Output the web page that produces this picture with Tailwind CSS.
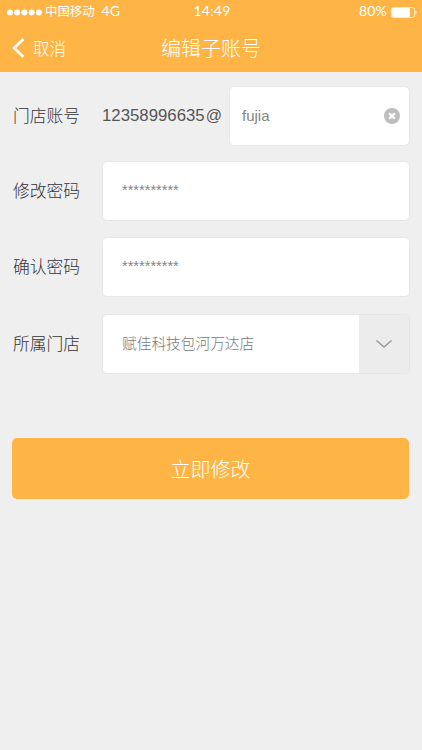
<!DOCTYPE html>
<html lang="zh-CN">

<head>
    <meta charset="UTF-8" />
    <meta name="viewport" content="width=device-width, initial-scale=1.0" />
    <title>编辑子账号</title>
    <script src="https://cdn.jsdelivr.net/npm/@tailwindcss/browser@4"></script>
</head>

<body class="bg-[#efefef] min-h-screen font-['Liberation_Sans','Noto_Sans_CJK_SC',sans-serif] font-light text-[#333]">

    <header class="bg-[#ffb546] text-white h-[72px]">
        <!-- Status bar -->
        <div class="grid grid-cols-3 items-center h-6 pl-[7px] pr-[5px]">
            <div class="flex items-center whitespace-nowrap">
                <svg class="w-[35px] h-[7px]" viewBox="0 0 35 7" fill="currentColor">
                    <circle cx="3" cy="3.5" r="3" />
                    <circle cx="10.2" cy="3.5" r="3" />
                    <circle cx="17.4" cy="3.5" r="3" />
                    <circle cx="24.6" cy="3.5" r="3" />
                    <circle cx="31.8" cy="3.5" r="3" />
                </svg>
                <span class="ml-[3px] text-[12.4px] leading-6 font-normal">中国移动</span>
                <span class="ml-[7px] pb-0.5 text-[14px] leading-[22px] font-['Lato','Liberation_Sans',sans-serif] font-normal">4G</span>
            </div>
            <div class="pb-0.5 text-center text-[14px] leading-[22px] font-['Lato','Liberation_Sans',sans-serif] font-normal tracking-[0.2px]">14:49</div>
            <div class="flex items-center justify-end">
                <span class="mr-1 pb-0.5 text-[14px] leading-[22px] font-['Lato','Liberation_Sans',sans-serif] font-normal tracking-[0.2px]">80%</span>
                <svg class="w-[26px] h-[11px]" viewBox="0 0 26 11" fill="none">
                    <rect x="0.5" y="0.5" width="23" height="10" rx="2" stroke="white" stroke-opacity="0.7" />
                    <rect x="1" y="1" width="18" height="9" rx="1" fill="white" />
                    <path d="M24.5 3.5c1.3 .4 1.3 3.6 0 4z" fill="white" />
                </svg>
            </div>
        </div>
        <!-- Title bar -->
        <div class="grid grid-cols-3 items-center h-12 px-3">
            <a href="#" class="flex items-center gap-[8px] text-[16.5px]">
                <svg class="w-[13px] h-5" viewBox="0 0 13 20" fill="none" stroke="currentColor" stroke-width="2.6">
                    <path d="M11.5 1L2 10l9.5 9" />
                </svg>
                <span class="pt-0.5">取消</span>
            </a>
            <h1 class="pt-0.5 text-center text-[20px] font-light whitespace-nowrap">编辑子账号</h1>
        </div>
    </header>

    <form class="px-3 pt-[14px]">
        <div class="flex items-center h-[60px]">
            <label class="w-[90px] pl-px pt-0.5 text-[16.8px]">门店账号</label>
            <span class="w-[127px] text-[16.8px] font-normal text-[#555] whitespace-nowrap">12358996635<span class="ml-px text-[16px]">@</span></span>
            <div class="flex items-center justify-between w-[181px] h-[60px] pl-3 pr-[9px] bg-white border border-[#e8e7e7] rounded-[5px]">
                <span class="text-[15px] font-normal text-[#858585]">fujia</span>
                <svg class="w-4 h-4" viewBox="0 0 16 16">
                    <circle cx="8" cy="8" r="8" fill="#bdbdbd" />
                    <path d="M5.2 5.2l5.6 5.6M10.8 5.2l-5.6 5.6" stroke="white" stroke-width="2.2" />
                </svg>
            </div>
        </div>

        <div class="flex items-center h-[60px] mt-[15px]">
            <label class="w-[90px] pl-px pt-0.5 text-[16.8px]">修改密码</label>
            <div class="flex items-center w-[308px] h-[60px] pl-[19px] bg-white border border-[#e8e7e7] rounded-[5px]">
                <span class="text-[14.6px] font-normal text-[#858585]">**********</span>
            </div>
        </div>

        <div class="flex items-center h-[60px] mt-4">
            <label class="w-[90px] pl-px pt-0.5 text-[16.8px]">确认密码</label>
            <div class="flex items-center w-[308px] h-[60px] pl-[19px] bg-white border border-[#e8e7e7] rounded-[5px]">
                <span class="text-[14.6px] font-normal text-[#858585]">**********</span>
            </div>
        </div>

        <div class="flex items-center h-[60px] mt-[17px]">
            <label class="w-[90px] pl-px pt-0.5 text-[16.8px]">所属门店</label>
            <div class="flex items-center w-[308px] h-[60px] pl-[19px] bg-white border border-[#e6e5e5] rounded-[5px] overflow-hidden">
                <span class="flex-1 text-[14.7px] text-[#777]">赋佳科技包河万达店</span>
                <span class="flex items-center justify-center w-[50px] h-full bg-[#ececec]">
                    <svg class="w-4 h-2" viewBox="0 0 16 8" fill="none" stroke="#999" stroke-width="1.4">
                        <path d="M.5 .5L8 7L15.500 .5" />
                    </svg>
                </span>
            </div>
        </div>

        <button type="button" class="block w-[397px] h-[61px] mt-[64px] pt-0.5 bg-[#ffb546] rounded-[5px] text-white text-[20px] font-light">立即修改</button>
    </form>

</body>

</html>
